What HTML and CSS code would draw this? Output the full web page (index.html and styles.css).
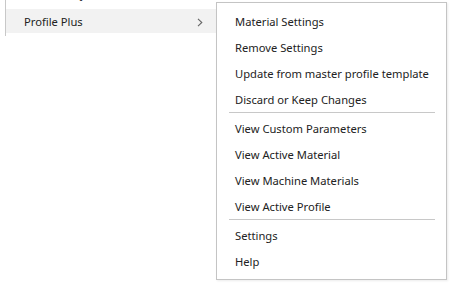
FILE: index.html
```html
<!DOCTYPE html>
<html lang="en">
<head>
    <meta charset="UTF-8">
    <title>Profile Plus menu</title>
    <link rel="stylesheet" href="styles.css">
</head>
<body>
    <div class="menu">
        <div class="menu-item partial">Tool Library</div>
        <div class="menu-item active">
            <span>Profile Plus</span>
            <svg class="chevron" width="6" height="9" viewBox="0 0 6 9">
                <path d="M1 0.8 L4.8 4.5 L1 8.2" fill="none" stroke="#666" stroke-width="1.1"/>
            </svg>
        </div>
    </div>

    <div class="submenu">
        <div class="sub-item">Material Settings</div>
        <div class="sub-item">Remove Settings</div>
        <div class="sub-item">Update from master profile template</div>
        <div class="sub-item">Discard or Keep Changes</div>
        <div class="separator"></div>
        <div class="sub-item">View Custom Parameters</div>
        <div class="sub-item">View Active Material</div>
        <div class="sub-item">View Machine Materials</div>
        <div class="sub-item">View Active Profile</div>
        <div class="separator"></div>
        <div class="sub-item">Settings</div>
        <div class="sub-item">Help</div>
    </div>
</body>
</html>
```

FILE: styles.css
```css
body {
    margin: 0;
    background: #fff;
    font-family: 'Noto Sans', 'Open Sans', sans-serif;
    font-size: 11.2px;
    color: #222;
    height: 283px;
    overflow: hidden;
}

.menu {
    margin-left: 5px;
    margin-top: -17px;
    width: 211px;
    border-left: 1px solid #c8c8c8;
    padding-bottom: 3px;
}

.menu-item {
    box-sizing: border-box;
    height: 24px;
    line-height: 22px;
    padding: 2px 14px 0 18px;
    display: flex;
    align-items: center;
    justify-content: space-between;
}

/* item above, scrolled mostly out of view */
.menu-item.partial {
    height: 26px;
    padding-top: 0;
    padding-bottom: 4px;
}

.menu-item.active {
    background: #f2f2f2;
}

.chevron {
    display: block;
}

.submenu {
    position: absolute;
    left: 216px;
    top: 2px;
    width: 229px;
    padding: 4px 0 6px;
    background: #fff;
    border: 1px solid #c4c4c4;
    box-shadow: 1px 1px 2px rgba(0,0,0,0.08);
}

.sub-item {
    box-sizing: border-box;
    height: 26px;
    line-height: 22px;
    padding-top: 4px;
    padding-left: 18px;
    white-space: nowrap;
}

.separator {
    height: 1px;
    background: #c8c8c8;
    margin: 1px 11px 1px 12px;
}
```
